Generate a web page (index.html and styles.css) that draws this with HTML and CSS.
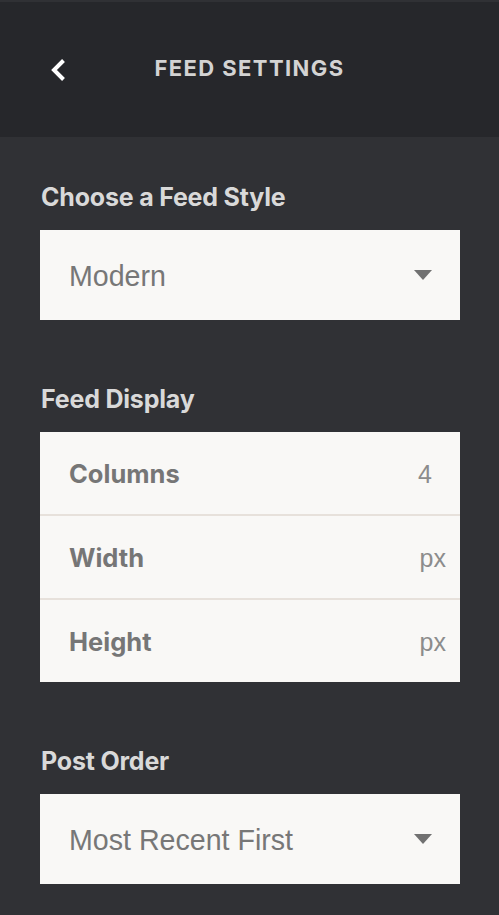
FILE: index.html
```html
<!DOCTYPE html>
<html lang="en">
<head>
<meta charset="utf-8">
<title>Feed Settings</title>
<link rel="stylesheet" href="styles.css">
</head>
<body>
<div class="app">
  <header class="topbar">
    <div class="back">
      <svg width="16" height="22" viewBox="0 0 16 22" aria-hidden="true">
        <path d="M13.5 1.5 L4 11 L13.5 20.5" fill="none" stroke="#ffffff" stroke-width="4" stroke-linecap="butt" stroke-linejoin="miter"/>
      </svg>
    </div>
    <h1 class="title">FEED SETTINGS</h1>
    <div class="spacer"></div>
  </header>

  <main class="content">
    <section class="group">
      <h2 class="label">Choose a Feed Style</h2>
      <div class="select">
        <span class="select-value">Modern</span>
        <span class="caret"></span>
      </div>
    </section>

    <section class="group">
      <h2 class="label">Feed Display</h2>
      <div class="card">
        <div class="row">
          <span class="row-label">Columns</span>
          <span class="row-value num">4</span>
        </div>
        <div class="row">
          <span class="row-label">Width</span>
          <span class="row-value">px</span>
        </div>
        <div class="row">
          <span class="row-label">Height</span>
          <span class="row-value">px</span>
        </div>
      </div>
    </section>

    <section class="group">
      <h2 class="label">Post Order</h2>
      <div class="select">
        <span class="select-value">Most Recent First</span>
        <span class="caret"></span>
      </div>
    </section>
  </main>
</div>
</body>
</html>
```

FILE: styles.css
```css
html, body {
  margin: 0;
  padding: 0;
}

body {
  background: #303135;
  font-family: Inter, Lato, sans-serif;
  width: 499px;
  height: 915px;
  overflow: hidden;
}

.app {
  padding-top: 2px;
}

.topbar {
  height: 135px;
  background: #26272b;
  display: grid;
  grid-template-columns: 1fr auto 1fr;
  align-items: center;
}

.back {
  padding-left: 50px;
  display: flex;
  align-items: center;
  height: 22px;
}

.back svg {
  display: block;
}

.title {
  margin: -3px 0 0 0;
  font-family: Inter, sans-serif;
  font-weight: 700;
  font-size: 22px;
  letter-spacing: 1.4px;
  color: #d3d3d3;
  line-height: 24px;
}

.content {
  padding: 48px 39px 0 40px;
}

.group + .group {
  margin-top: 67px;
}

.label {
  margin: 0 0 20px 1px;
  font-family: Inter, sans-serif;
  font-weight: 700;
  font-size: 25px;
  line-height: 25px;
  letter-spacing: -0.2px;
  color: #d9d9d9;
}

.select {
  height: 90px;
  background: #f9f8f6;
  display: flex;
  align-items: center;
  justify-content: space-between;
  padding: 0 28px 0 29px;
}

.select-value {
  font-family: "Liberation Sans", Arial, sans-serif;
  font-size: 28.6px;
  color: #777777;
  padding-top: 3px;
}

.caret {
  width: 0;
  height: 0;
  border-left: 9px solid transparent;
  border-right: 9px solid transparent;
  border-top: 10px solid #717171;
}

.card {
  background: #f9f8f6;
}

.row {
  height: 82px;
  display: flex;
  align-items: center;
  justify-content: space-between;
  padding: 0 14px 0 29px;
}

.row + .row {
  border-top: 2px solid #e7e1db;
}

.row-label {
  font-family: Inter, sans-serif;
  font-weight: 700;
  font-size: 25.5px;
  color: #767676;
}

.row-value {
  font-family: "Liberation Sans", Arial, sans-serif;
  font-size: 25px;
  color: #8c8c8c;
  padding-top: 3px;
}

.row-value.num {
  margin-right: 14px;
}
```
